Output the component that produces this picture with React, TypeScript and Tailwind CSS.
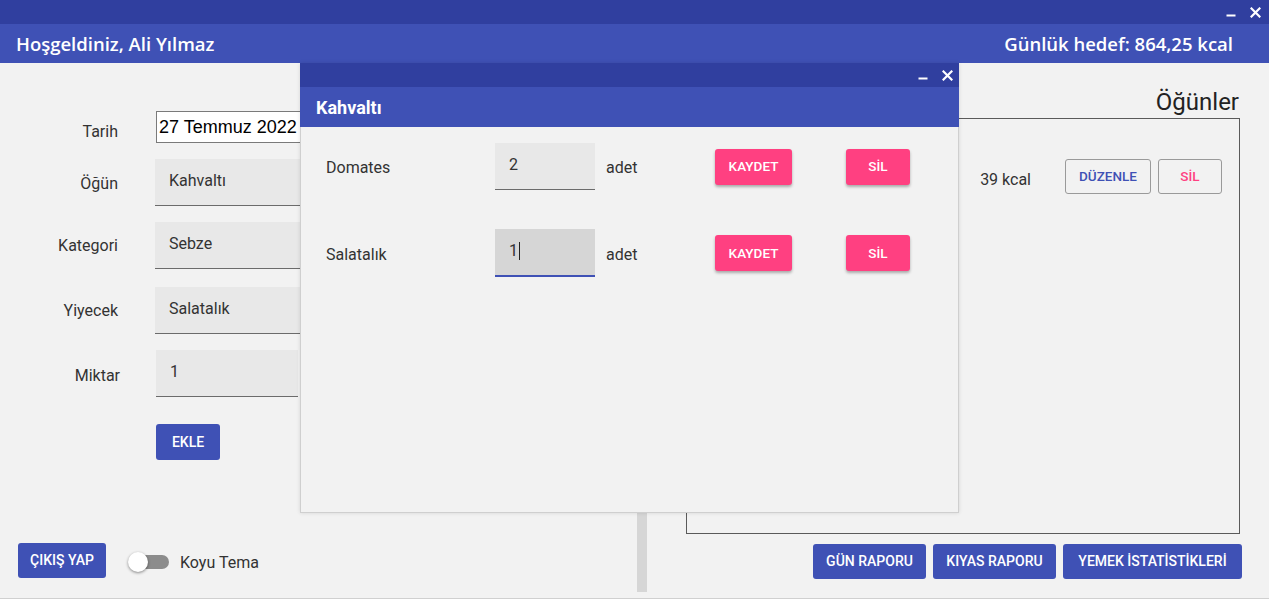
import React from "react";

const roboto = { fontFamily: "Roboto, 'Noto Sans', sans-serif" };

function WinControls() {
  return (
    <div className="flex items-center gap-[14px]">
      <svg width="10" height="10" viewBox="0 0 10 10">
        <rect x="0.5" y="7.5" width="9" height="2" fill="white" />
      </svg>
      <svg width="11" height="11" viewBox="0 0 11 11">
        <path d="M1.5 1.5 L9.5 9.5 M9.5 1.5 L1.5 9.5" stroke="white" strokeWidth="2.2" strokeLinecap="square" />
      </svg>
    </div>
  );
}

function PinkButton({ label, w }: { label: string; w: string }) {
  return (
    <button
      className={`${w} h-[36px] rounded-[3px] bg-[#ff4081] text-white text-[13.5px] font-medium shadow-[0_2px_3px_rgba(0,0,0,0.3)]`}
      style={roboto}
    >
      {label}
    </button>
  );
}

function BlueButton({ label, className = "" }: { label: string; className?: string }) {
  return (
    <button
      className={`h-[35px] rounded-[3px] bg-[#3f51b5] text-white text-[14px] font-medium ${className}`}
      style={roboto}
    >
      {label}
    </button>
  );
}

function FieldBox({ value, w = "w-[220px]" }: { value: string; w?: string }) {
  return (
    <div className={`${w} h-[47px] bg-[#e8e8e8] border-b border-[#6b6b6b] flex items-center pl-[14px] text-[16px] text-[#333] pb-[2px]`}>
      {value}
    </div>
  );
}

export default function App() {
  return (
    <div className="w-[1269px] h-[599px] relative overflow-hidden flex flex-col bg-[#f2f2f2] border-b border-[#d0d0d0]" style={roboto}>
      {/* window chrome */}
      <div className="h-[24px] bg-[#303f9f] flex items-center justify-end pr-[8px] shrink-0">
        <WinControls />
      </div>
      <div className="h-[39px] bg-[#3f51b5] flex items-center justify-between pl-[16px] pr-[36px] shrink-0 text-white text-[18.5px] font-semibold" style={{ fontFamily: "'Open Sans', 'Noto Sans', sans-serif" }}>
        <span>Hoşgeldiniz, Ali Yılmaz</span>
        <span>Günlük hedef: 864,25 kcal</span>
      </div>

      <div className="flex-1 flex">
        {/* left: entry form */}
        <div className="w-[637px] flex flex-col">
          <div className="pt-[47px] grid grid-cols-[118px_auto] gap-x-[38px] items-center text-[16px] text-[#333]">
            <span className="text-right pt-[10px]">Tarih</span>
            <div className="w-[260px] h-[32px] bg-white border border-[#7a7a7a] flex items-center pl-[2px] text-[18px] text-black" style={{ fontFamily: "'Liberation Sans', Arial, sans-serif" }}>
              27 Temmuz 2022
            </div>

            <span className="text-right mt-[15px] pt-[2px]">Öğün</span>
            <div className="mt-[15px] -ml-[1px]"><FieldBox value="Kahvaltı" /></div>

            <span className="text-right mt-[16px]">Kategori</span>
            <div className="mt-[16px] -ml-[1px]"><FieldBox value="Sebze" /></div>

            <span className="text-right mt-[18px]">Yiyecek</span>
            <div className="mt-[18px] -ml-[1px]"><FieldBox value="Salatalık" /></div>

            <span className="text-right mt-[16px] pt-[4px] -mr-[2px]">Miktar</span>
            <div className="mt-[16px]"><FieldBox value="1" w="w-[142px]" /></div>

            <span />
            <div className="mt-[27px]">
              <BlueButton label="EKLE" className="w-[64px] h-[36px]" />
            </div>
          </div>

          <div className="mt-auto flex items-center pl-[18px] pb-[20px]">
            <BlueButton label="ÇIKIŞ YAP" className="w-[88px]" />
            <div className="ml-[22px] relative w-[42px] h-[22px] flex items-center mt-[3px]">
              <div className="ml-[5px] w-[36px] h-[14px] rounded-full bg-[#8c8c8c]" />
              <div className="absolute left-0 top-[1px] w-[20px] h-[20px] rounded-full bg-white shadow-[0_1px_3px_rgba(0,0,0,0.45)]" />
            </div>
            <span className="ml-[10px] text-[16px] text-[#333] pt-[4px]">Koyu Tema</span>
          </div>
        </div>

        {/* splitter */}
        <div className="w-[10px] flex flex-col pt-[449px] pb-[6px]">
          <div className="flex-1 bg-[#d6d6d6]" />
        </div>

        {/* right: meals */}
        <div className="flex-1 flex flex-col pl-[39px] pr-[29px]">
          <div className="text-right text-[24px] text-[#222] leading-none pt-[27px] pb-[4px] pr-[1px]">Öğünler</div>
          <div className="h-[416px] border border-[#5a5a5a] pt-[40px] pr-[17px] flex justify-end items-start">
            <div className="flex items-center">
              <span className="text-[16px] text-[#333] mr-[34px] pt-[6px]">39 kcal</span>
              <button className="w-[86px] h-[35px] border border-[#9a9a9a] rounded-[3px] text-[#3f51b5] text-[13.5px] font-medium">DÜZENLE</button>
              <button className="ml-[7px] w-[64px] h-[35px] border border-[#9a9a9a] rounded-[3px] text-[#ff4081] text-[13.5px] font-medium">SİL</button>
            </div>
          </div>
          <div className="mt-[10px] flex justify-end gap-[7px] -mr-[2px]">
            <BlueButton label="GÜN RAPORU" className="w-[113px] h-[34px]" />
            <BlueButton label="KIYAS RAPORU" className="w-[123px] h-[34px]" />
            <BlueButton label="YEMEK İSTATİSTİKLERİ" className="w-[179px] h-[34px]" />
          </div>
        </div>
      </div>

      {/* dialog window over the page */}
      <div className="absolute left-[300px] top-[63px] w-[659px] h-[450px] flex flex-col bg-[#f2f2f2] border border-[#cfcfcf] border-t-0 shadow-[0_0_4px_rgba(0,0,0,0.12)]">
        <div className="h-[24px] bg-[#303f9f] flex items-center justify-end pr-[6px] shrink-0 -mx-[1px]">
          <WinControls />
        </div>
        <div className="h-[40px] bg-[#3f51b5] flex items-center pl-[16px] text-white text-[18px] font-bold shrink-0 -mx-[1px]">
          Kahvaltı
        </div>
        <div className="flex flex-col gap-[39px] pt-[16px] text-[16px] text-[#333]">
          <div className="flex items-center">
            <span className="w-[194px] pl-[25px] pt-[3px]">Domates</span>
            <div className="w-[100px] h-[47px] bg-[#e8e8e8] border-b border-[#6b6b6b] flex items-center pl-[14px] pb-[2px]">2</div>
            <span className="ml-[11px] w-[109px] pt-[3px]">adet</span>
            <PinkButton label="KAYDET" w="w-[77px]" />
            <div className="ml-[54px]"><PinkButton label="SİL" w="w-[64px]" /></div>
          </div>
          <div className="flex items-center">
            <span className="w-[194px] pl-[25px] pt-[3px]">Salatalık</span>
            <div className="w-[100px] h-[48px] bg-[#d6d6d6] border-b-2 border-[#3f51b5] flex items-center pl-[14px] pb-[2px]">
              1<span className="inline-block w-px h-[18px] bg-[#222] ml-[1px]" />
            </div>
            <span className="ml-[11px] w-[109px] pt-[3px]">adet</span>
            <PinkButton label="KAYDET" w="w-[77px]" />
            <div className="ml-[54px]"><PinkButton label="SİL" w="w-[64px]" /></div>
          </div>
        </div>
      </div>
    </div>
  );
}
